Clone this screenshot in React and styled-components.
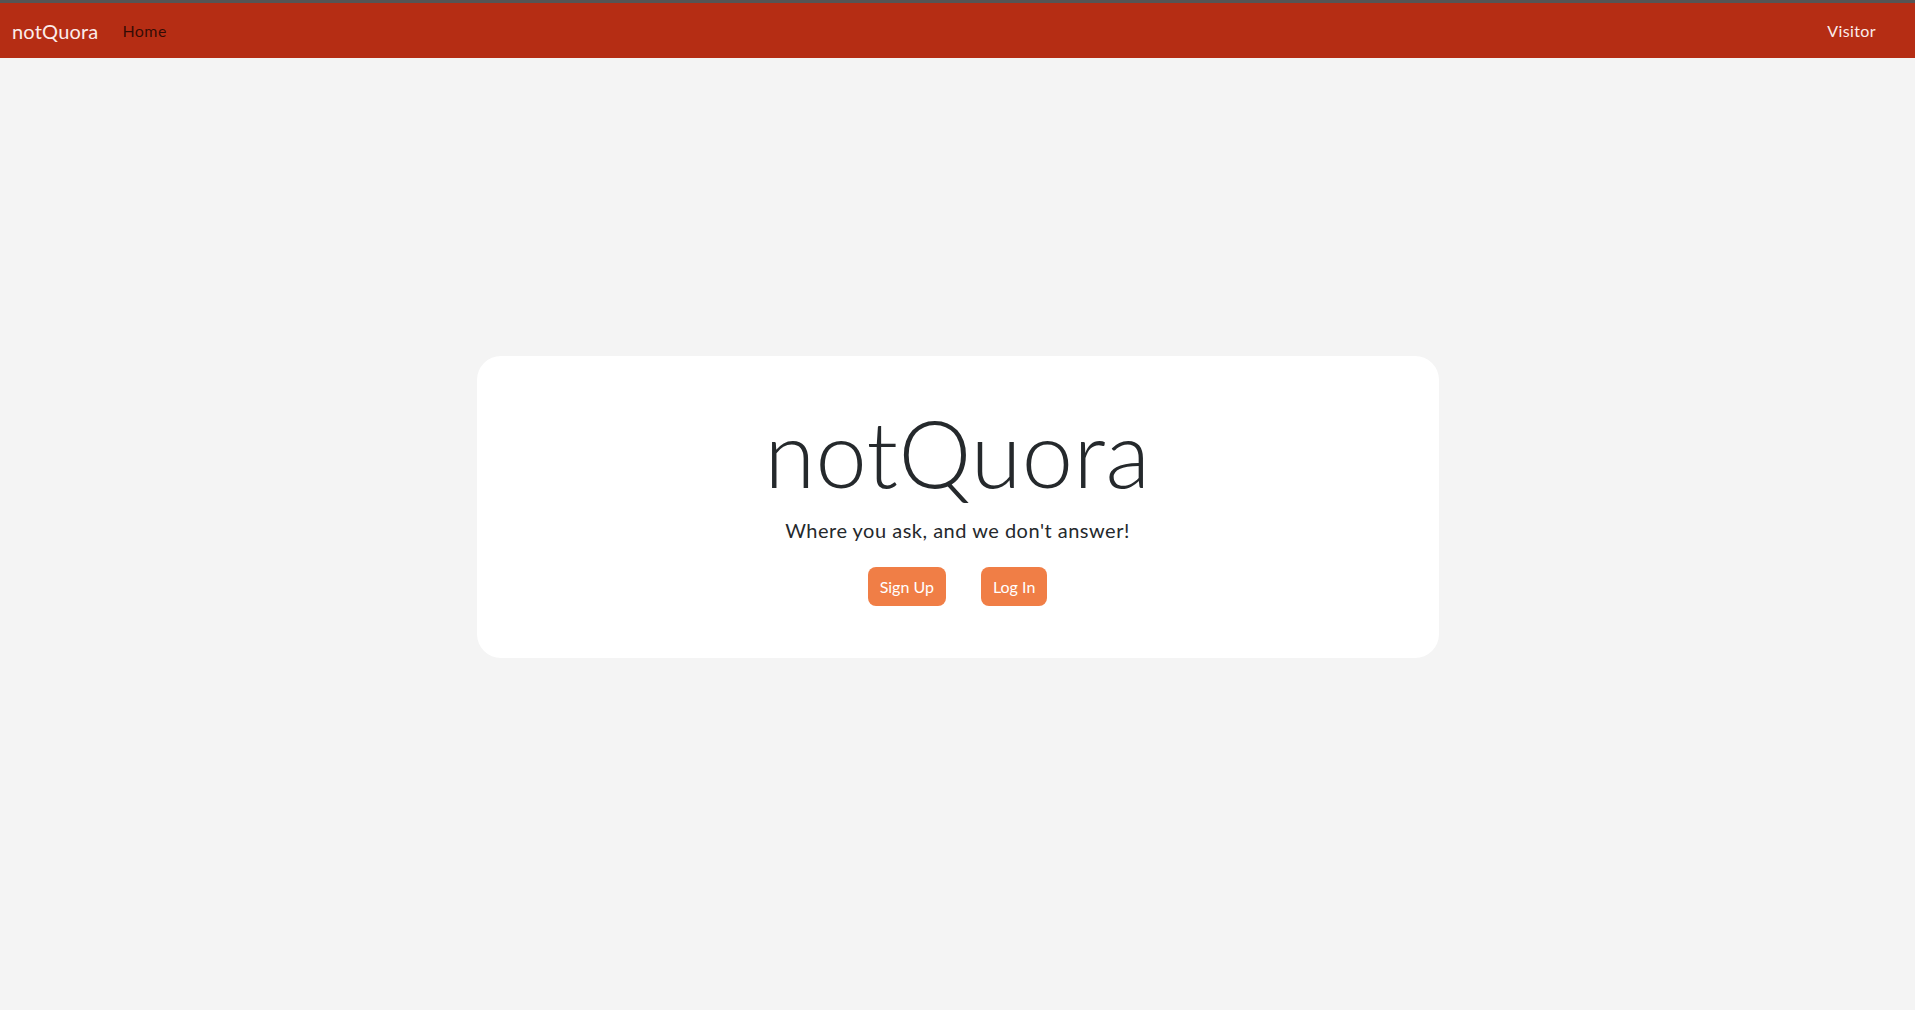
import React from "react";
import styled, { createGlobalStyle } from "styled-components";

const COLORS = {
  page: "#f4f4f4",
  nav: "#b52d14",
  navEdge: "#555555",
  ink: "#25292c",
  accent: "#f07e46",
  white: "#ffffff",
};

const GlobalStyle = createGlobalStyle`
  html, body {
    margin: 0;
    padding: 0;
    background: ${COLORS.page};
    font-family: Lato, "Open Sans", sans-serif;
    color: ${COLORS.ink};
  }
  #root {
    min-height: 100vh;
  }
`;

const NavBar = styled.nav`
  display: flex;
  align-items: center;
  height: 55px;
  padding: 0 39px 0 12px;
  background-color: ${COLORS.nav};
  border-top: 3px solid ${COLORS.navEdge};
`;

const Brand = styled.a`
  font-size: 20px;
  font-weight: 400;
  letter-spacing: 0.2px;
  color: #fbecea;
  text-decoration: none;
  margin-right: 24px;
`;

const NavLink = styled.a`
  font-size: 16px;
  letter-spacing: 0.4px;
  color: ${(p) => (p.$light ? "#fbecea" : "rgba(0, 0, 0, 0.72)")};
  margin-left: ${(p) => (p.$push ? "auto" : "0")};
  text-decoration: none;
`;

const Main = styled.main`
  padding-top: 298px;
`;

const Card = styled.section`
  width: 962px;
  margin: 0 auto;
  box-sizing: border-box;
  padding: 42px 0 52px;
  background: ${COLORS.white};
  border-radius: 24px;
  display: flex;
  flex-direction: column;
  align-items: center;
`;

const Title = styled.h1`
  margin: 0 0 7px;
  font-size: 92px;
  font-weight: 300;
  line-height: 1.2;
  letter-spacing: 0.4px;
`;

const Lead = styled.p`
  margin: 0 0 22px;
  font-size: 20px;
  font-weight: 400;
  line-height: 1.5;
  letter-spacing: 0.5px;
`;

const Actions = styled.div`
  display: flex;
  gap: 35px;
`;

const Button = styled.button`
  height: 39px;
  padding: 0 12px;
  border: none;
  border-radius: 8px;
  background: ${COLORS.accent};
  color: ${COLORS.white};
  font-family: inherit;
  font-size: 16px;
  cursor: pointer;
`;

const App = () => {
  return (
    <>
      <GlobalStyle />
      <NavBar>
        <Brand href="#">notQuora</Brand>
        <NavLink href="#">Home</NavLink>
        <NavLink href="#" $light $push>
          Visitor
        </NavLink>
      </NavBar>
      <Main>
        <Card>
          <Title>notQuora</Title>
          <Lead>Where you ask, and we don't answer!</Lead>
          <Actions>
            <Button>Sign Up</Button>
            <Button>Log In</Button>
          </Actions>
        </Card>
      </Main>
    </>
  );
};

export default App;
